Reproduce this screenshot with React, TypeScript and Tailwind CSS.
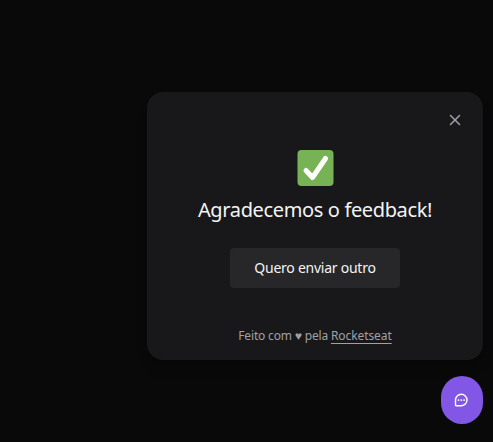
import { PiXBold } from "react-icons/pi";

function SuccessIcon() {
  return (
    <svg width="37" height="36" viewBox="-0.5 0 37 36" className="ml-px" aria-hidden="true">
      <rect width="36" height="36" rx="4" fill="#77b255" />
      <path
        d="M8.5 20.5 15 27.5 28 8.5"
        fill="none"
        stroke="#fff"
        strokeWidth="5"
        strokeLinecap="round"
        strokeLinejoin="round"
      />
    </svg>
  );
}

function ChatIcon() {
  return (
    <svg width="16" height="16" viewBox="0 0 16 16" aria-hidden="true">
      <path
        d="M8.2 2.2a5.8 5.8 0 1 1 0 11.6H3.1a.6.6 0 0 1-.6-.6V8a5.75 5.75 0 0 1 5.7-5.8Z"
        fill="none"
        stroke="currentColor"
        strokeWidth="1.4"
        strokeLinejoin="round"
      />
      <circle cx="5.5" cy="8.1" r="0.95" fill="currentColor" />
      <circle cx="8.3" cy="8.1" r="0.95" fill="currentColor" />
      <circle cx="11.1" cy="8.1" r="0.95" fill="currentColor" />
    </svg>
  );
}

function FeedbackCard() {
  return (
    <div className="flex h-[268px] w-[336px] flex-col items-center rounded-2xl bg-[#18181b] p-4 shadow-lg">
      <header className="flex h-6 w-full justify-end pt-1 pr-1">
        <button type="button" title="Fechar" className="h-4 w-4 text-zinc-400">
          <PiXBold size={16} />
        </button>
      </header>
      <div className="flex flex-col items-center pt-[18px]">
        <SuccessIcon />
        <span className="mt-2.5 text-xl leading-7 tracking-[-0.36px] whitespace-nowrap text-zinc-100">
          Agradecemos o feedback!
        </span>
        <button
          type="button"
          className="mt-6 h-10 w-[170px] rounded-[4px] bg-[#27272a] text-sm leading-6 tracking-[-0.25px] whitespace-nowrap text-zinc-100"
        >
          Quero enviar outro
        </button>
      </div>
      <footer className="mt-auto text-xs leading-4 tracking-[-0.17px] whitespace-nowrap text-[#a1a1a1]">
        Feito com ♥ pela{" "}
        <a className="tracking-[-0.08px] underline underline-offset-3">Rocketseat</a>
      </footer>
    </div>
  );
}

export default function App() {
  return (
    <main className="flex h-[442px] w-[493px] flex-col items-end justify-end gap-4 bg-[#09090a] pr-2.5 pb-[18px] font-['Noto_Sans',sans-serif]">
      <FeedbackCard />
      <button
        type="button"
        title="Feedback"
        className="flex h-12 w-[42px] items-center justify-center rounded-full bg-[#8257e5] pr-0.5 text-white"
      >
        <ChatIcon />
      </button>
    </main>
  );
}
